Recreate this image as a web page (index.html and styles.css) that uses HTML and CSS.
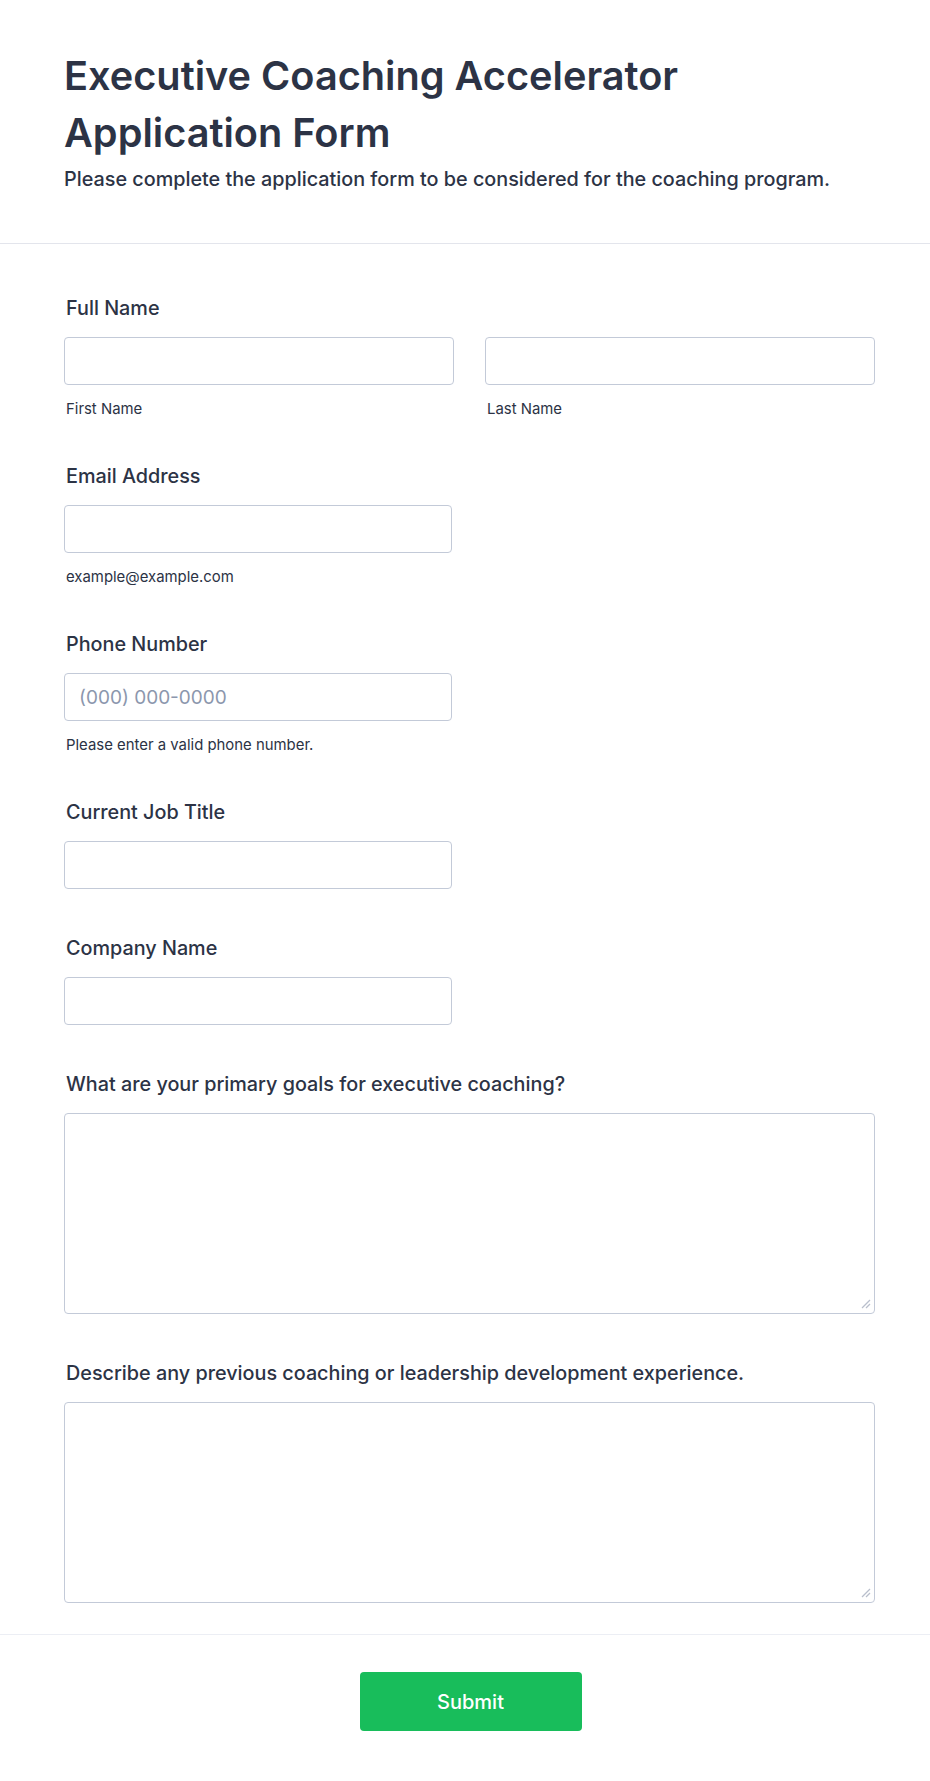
FILE: index.html
```html
<!DOCTYPE html>
<html lang="en">
<head>
<meta charset="utf-8">
<title>Executive Coaching Accelerator Application Form</title>
<link rel="stylesheet" href="styles.css">
</head>
<body>
<form class="form">
  <header class="form-header">
    <h1 class="form-title">Executive Coaching Accelerator Application Form</h1>
    <p class="form-subtitle">Please complete the application form to be considered for the coaching program.</p>
  </header>

  <section class="form-body">
    <div class="field">
      <label class="field-label">Full Name</label>
      <div class="name-row">
        <div class="name-col">
          <input class="text-input" type="text">
          <span class="sublabel">First Name</span>
        </div>
        <div class="name-col">
          <input class="text-input" type="text">
          <span class="sublabel">Last Name</span>
        </div>
      </div>
    </div>

    <div class="field">
      <label class="field-label">Email Address</label>
      <input class="text-input short" type="email">
      <span class="sublabel">example@example.com</span>
    </div>

    <div class="field">
      <label class="field-label">Phone Number</label>
      <input class="text-input short" type="tel" placeholder="(000) 000-0000">
      <span class="sublabel">Please enter a valid phone number.</span>
    </div>

    <div class="field">
      <label class="field-label">Current Job Title</label>
      <input class="text-input short" type="text">
    </div>

    <div class="field">
      <label class="field-label">Company Name</label>
      <input class="text-input short" type="text">
    </div>

    <div class="field">
      <label class="field-label">What are your primary goals for executive coaching?</label>
      <div class="area-wrap">
        <textarea class="text-area"></textarea>
        <svg class="grip" width="10" height="10" viewBox="0 0 10 10" aria-hidden="true">
          <line x1="1" y1="9" x2="9" y2="1" stroke="#b9bfcc" stroke-width="1.2"/>
          <line x1="5" y1="9" x2="9" y2="5" stroke="#b9bfcc" stroke-width="1.2"/>
        </svg>
      </div>
    </div>

    <div class="field last">
      <label class="field-label">Describe any previous coaching or leadership development experience.</label>
      <div class="area-wrap">
        <textarea class="text-area"></textarea>
        <svg class="grip" width="10" height="10" viewBox="0 0 10 10" aria-hidden="true">
          <line x1="1" y1="9" x2="9" y2="1" stroke="#b9bfcc" stroke-width="1.2"/>
          <line x1="5" y1="9" x2="9" y2="5" stroke="#b9bfcc" stroke-width="1.2"/>
        </svg>
      </div>
    </div>
  </section>

  <footer class="form-footer">
    <button class="submit-btn" type="button">Submit</button>
  </footer>
</form>
</body>
</html>
```

FILE: styles.css
```css
* {
  box-sizing: border-box;
}

html, body {
  margin: 0;
  padding: 0;
  background: #ffffff;
}

body {
  font-family: Inter, "Noto Sans", "Liberation Sans", sans-serif;
  color: #2c3345;
}

.form {
  width: 930px;
  min-height: 1781px;
  background: #ffffff;
}

.form-header {
  padding: 48px 55px 52px 64px;
  border-bottom: 1px solid #e3e5ec;
}

.form-title {
  margin: 0;
  font-size: 39.7px;
  line-height: 57px;
  font-weight: 600;
  color: #2c3345;
  max-width: 760px;
}

.form-subtitle {
  margin: 5px 0 0;
  font-size: 19.8px;
  line-height: 24px;
  font-weight: 500;
  color: #2c3345;
}

.form-body {
  padding: 52px 55px 0 64px;
}

.field {
  display: flex;
  flex-direction: column;
  align-items: flex-start;
  margin-bottom: 47px;
}

.field.last {
  margin-bottom: 31px;
}

.field-label {
  display: block;
  padding-left: 2px;
  margin-bottom: 17px;
  font-size: 19.8px;
  line-height: 24px;
  font-weight: 500;
  color: #2c3345;
}

.name-row {
  display: flex;
  gap: 31px;
  width: 100%;
}

.name-col {
  flex: 1;
  display: flex;
  flex-direction: column;
}

.text-input {
  display: block;
  width: 100%;
  height: 48px;
  padding: 0 14px;
  border: 1px solid #c3cad8;
  border-radius: 4px;
  background: #ffffff;
  font-family: inherit;
  font-size: 19px;
  color: #2c3345;
  outline: none;
}

.text-input.short {
  width: 388px;
}

.text-input::placeholder {
  color: #8c97ad;
}

.sublabel {
  display: block;
  margin-top: 15px;
  margin-bottom: -1px;
  padding-left: 2px;
  font-size: 14.9px;
  line-height: 18px;
  color: #2c3345;
}

.area-wrap {
  position: relative;
  width: 100%;
}

.text-area {
  display: block;
  width: 100%;
  height: 201px;
  padding: 10px 14px;
  border: 1px solid #c3cad8;
  border-radius: 4px;
  background: #ffffff;
  font-family: inherit;
  font-size: 19px;
  color: #2c3345;
  outline: none;
  resize: none;
}

.grip {
  position: absolute;
  right: 4px;
  bottom: 5px;
  pointer-events: none;
}

.form-footer {
  border-top: 1px solid #eceef4;
  padding: 37px 54px 50px 65px;
  display: flex;
  justify-content: center;
}

.submit-btn {
  width: 222px;
  height: 59px;
  border: none;
  border-radius: 4px;
  background: #18bd5b;
  color: #ffffff;
  font-family: inherit;
  font-size: 20px;
  font-weight: 500;
  cursor: pointer;
}
```
